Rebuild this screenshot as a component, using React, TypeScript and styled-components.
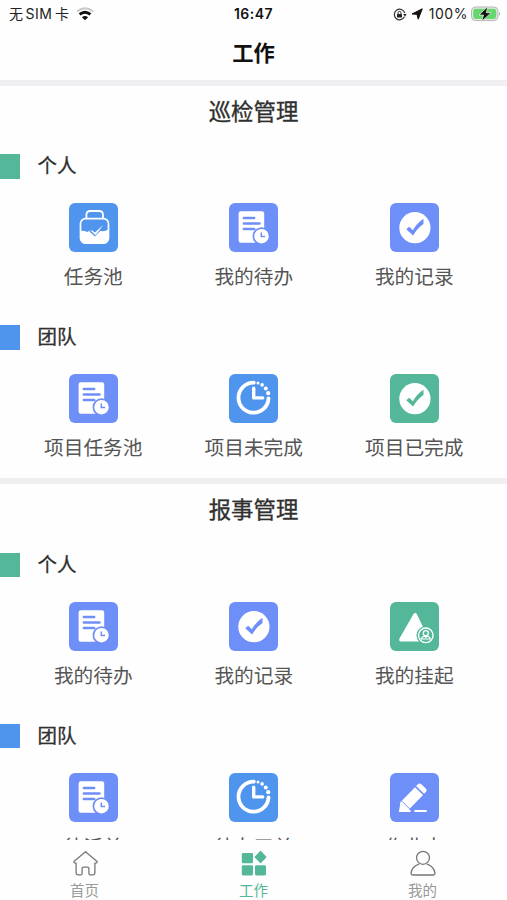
import React from "react";
import styled, { createGlobalStyle } from "styled-components";

const GREEN = "#55b799";
const BLUE = "#5095ed";
const VIOLET = "#6f8ff8";

const GlobalStyle = createGlobalStyle`
  * { box-sizing: border-box; }
  body { margin: 0; background: #fff; overflow: hidden; }
  svg { display: block; flex: none; }
`;

const Screen = styled.div`
  height: 900px;
  width: 100%;
  display: flex;
  flex-direction: column;
  overflow: hidden;
  background: #fefefe;
  font-family: "Inter", "Noto Sans CJK SC", sans-serif;
  color: #303030;
`;

const StatusBar = styled.div`
  height: 28px;
  flex: none;
  display: grid;
  grid-template-columns: 1fr auto 1fr;
  align-items: center;
  padding: 0 6px 0 9px;
  font-size: 14px;
  line-height: 28px;
  color: #222;
`;

const Carrier = styled.div`
  display: flex;
  align-items: center;
  gap: 7px;
  white-space: nowrap;
`;

const CarrierText = styled.span`
  display: flex;
  gap: 2.5px;
  font-size: 14px;
`;

const CarrierLatin = styled.span`
  letter-spacing: 0.5px;
`;

const Clock = styled.div`
  font-weight: 600;
  font-size: 14px;
  letter-spacing: 0.5px;
  margin-right: 3px;
  color: #111;
`;

const StatusRight = styled.div`
  display: flex;
  align-items: center;
  justify-content: flex-end;
`;

const Percent = styled.span`
  margin: 0 3px 0 4px;
  font-size: 14px;
  letter-spacing: 0.55px;
`;

const Header = styled.header`
  height: 51.5px;
  flex: none;
  text-align: center;
  font-size: 21.3px;
  line-height: 50px;
  font-weight: 700;
  color: #111;
`;

const Content = styled.main`
  flex: 1;
  min-height: 0;
  overflow: hidden;
`;

const Section = styled.section`
  height: 398.7px;
  border-top: 6px solid #efeff1;
`;

const SectionTitle = styled.h2`
  margin: 0;
  height: 68.5px;
  text-align: center;
  font-size: 22.4px;
  line-height: 51px;
  font-weight: 400;
  -webkit-text-stroke: 0.35px currentColor;
  color: #303030;
`;

const Group = styled.div`
  height: 171px;
`;

const GroupTitle = styled.div<{ $color: string }>`
  display: flex;
  align-items: center;
  gap: 18px;
  height: 25px;
  font-size: 19.5px;
  line-height: 27px;
  font-weight: 400;
  -webkit-text-stroke: 0.3px currentColor;
  &::before {
    content: "";
    width: 19.5px;
    height: 24.5px;
    background: ${(p) => p.$color};
  }
`;

const Grid = styled.div`
  display: grid;
  grid-template-columns: repeat(3, 1fr);
  padding: 24.3px 12.5px 0 13px;
`;

const Item = styled.div`
  display: flex;
  flex-direction: column;
  align-items: center;
  gap: 10px;
  font-size: 19.7px;
  line-height: 30px;
  color: #555;
  white-space: nowrap;
`;

const Tile = styled.div<{ $color: string }>`
  width: 49px;
  height: 49px;
  border-radius: 6px;
  background: ${(p) => p.$color};
`;

const TabBar = styled.nav`
  height: 60px;
  flex: none;
  display: grid;
  grid-template-columns: repeat(3, 1fr);
  background: #fefefe;
`;

const Tab = styled.div<{ $active?: boolean }>`
  display: flex;
  flex-direction: column;
  align-items: center;
  padding-top: 10px;
  gap: 5px;
  font-size: 14.5px;
  line-height: 20px;
  color: ${(p) => (p.$active ? GREEN : "#999")};
`;

type Kind = "bag" | "todo" | "check" | "clock" | "hold" | "pencil";

function Glyph({ kind, color }: { kind: Kind; color: string }) {
  return (
    <svg width="49" height="49" viewBox="0 0 49 49" fill="none">
      {kind === "bag" && (
        <>
          <path d="M17.4 15.5V12q0-4 4-4h8.6q4 0 4 4v3.5" stroke="#fff" strokeWidth="1.8" />
          <rect x="11.5" y="15.6" width="28" height="24.6" rx="5" stroke="#fff" strokeWidth="1.7" />
          <path d="M11.5 28q3.5-1 6.5 1l3.5-1.8 4 4 5-3.8q4 2 9-1.2V35.6q0 5-5 5h-18q-5 0-5-5Z" fill="#fff" />
          <path d="m21.3 27.3 4.6 3.9 8.6-9" stroke={color} strokeWidth="3.2" />
          <path d="m22.6 26.9 3.3 2.6 8.3-7.6-7.6 10.4-4.6-4.4Z" fill="#fff" />
        </>
      )}
      {kind === "todo" && (
        <>
          <rect x="9.6" y="8.2" width="25.6" height="31.6" rx="2.3" fill="#fff" />
          <path d="M14.9 15h10.2M14.9 20.5h15.6M14.9 26h10.2" stroke={color} strokeWidth="2.6" strokeLinecap="round" />
          <circle cx="32.5" cy="33.2" r="8.1" fill="#fff" stroke={color} strokeWidth="1.7" />
          <path d="M32.3 29.4v4.1h3.8" stroke={color} strokeWidth="1.5" />
        </>
      )}
      {kind === "check" && (
        <>
          <circle cx="24.9" cy="24.7" r="15.6" fill="#fff" />
          <path d="m16.2 26.2 3-2.4 3.7 3.4q4.1-7.4 10.6-11.5v5.3q-5.9 3.8-10.4 11.6Z" fill={color} />
        </>
      )}
      {kind === "clock" && (
        <>
          <path d="M24.8 8.7a15 15 0 1 0 14.7 15.6" stroke="#fff" strokeWidth="3.8" strokeLinecap="round" />
          <g fill="#fff">
            <circle cx="29" cy="8.9" r="1.5" />
            <circle cx="33.1" cy="10.9" r="1.8" />
            <circle cx="36.8" cy="14.4" r="2" />
            <circle cx="39.2" cy="19.2" r="2.1" />
          </g>
          <path d="M24.7 14.3v9.6h9" stroke="#fff" strokeWidth="3.4" strokeLinecap="round" strokeLinejoin="round" />
        </>
      )}
      {kind === "hold" && (
        <>
          <path d="M25.2 13 11 37.6h26Z" fill="#fff" stroke="#fff" strokeWidth="3.8" strokeLinejoin="round" />
          <circle cx="35.8" cy="33.3" r="9.3" fill={color} />
          <circle cx="35.8" cy="33.3" r="7.3" stroke="#fff" strokeWidth="1.4" />
          <circle cx="35.8" cy="31.2" r="2.5" stroke="#fff" strokeWidth="1.3" />
          <path d="M31.2 37q.5-2.3 3.2-2.9l1.4 1.3 1.4-1.3q2.7.6 3.2 2.9Z" stroke="#fff" strokeWidth="1.2" />
        </>
      )}
      {kind === "pencil" && (
        <>
          <g transform="translate(9.6 38.2) rotate(-46)" fill="#fff">
            <path d="M0 0 7.8-5.6V5.6Z" stroke="#fff" strokeLinejoin="round" />
            <path d="M9-5.6H28V5.6H9Z" />
            <path d="M29.5-5.6h2.5q2.5 0 2.5 2.5v6.2q0 2.5-2.5 2.5h-2.5Z" />
          </g>
          <path d="M9.8 38.1h10M25.2 38.1H36" stroke="#fff" strokeWidth="2" strokeLinecap="round" />
        </>
      )}
    </svg>
  );
}

type Entry = { kind: Kind; color: string; label: string };
type GroupData = { title: string; color: string; items: Entry[] };

const sections: { title: string; groups: GroupData[] }[] = [
  {
    title: "巡检管理",
    groups: [
      {
        title: "个人",
        color: GREEN,
        items: [
          { kind: "bag", color: BLUE, label: "任务池" },
          { kind: "todo", color: VIOLET, label: "我的待办" },
          { kind: "check", color: VIOLET, label: "我的记录" },
        ],
      },
      {
        title: "团队",
        color: BLUE,
        items: [
          { kind: "todo", color: VIOLET, label: "项目任务池" },
          { kind: "clock", color: BLUE, label: "项目未完成" },
          { kind: "check", color: GREEN, label: "项目已完成" },
        ],
      },
    ],
  },
  {
    title: "报事管理",
    groups: [
      {
        title: "个人",
        color: GREEN,
        items: [
          { kind: "todo", color: VIOLET, label: "我的待办" },
          { kind: "check", color: VIOLET, label: "我的记录" },
          { kind: "hold", color: GREEN, label: "我的挂起" },
        ],
      },
      {
        title: "团队",
        color: BLUE,
        items: [
          { kind: "todo", color: VIOLET, label: "待派单" },
          { kind: "clock", color: BLUE, label: "待办工单" },
          { kind: "pencil", color: VIOLET, label: "作业中" },
        ],
      },
    ],
  },
];

function Wifi() {
  return (
    <svg width="18" height="14" viewBox="0 0 18 14" fill="none">
      <path d="M.9 4.4q8.1-6.4 16.2 0" stroke="#c9c9c9" strokeWidth="1.9" />
      <path d="M3.6 7.4q5.4-4.4 10.8 0" stroke="#111" strokeWidth="2.8" />
      <path d="M5.9 10.2q3.1-2.3 6.2 0L9 13.2Z" fill="#111" />
    </svg>
  );
}

function RotationLock() {
  return (
    <svg width="14" height="13" viewBox="0 0 14 13" fill="none">
      <path d="M11.4 8.8A5.3 5.3 0 1 1 11.7 5" stroke="#333" strokeWidth="1.2" />
      <path d="m10.2 6.1 3.4-.2-1.6 2.8Z" fill="#222" />
      <rect x="4" y="5.9" width="5" height="3.6" rx=".6" fill="#222" />
      <path d="M5 6V4.9q0-1.5 1.5-1.5T8 4.9V6" stroke="#333" />
    </svg>
  );
}

function LocationArrow() {
  return (
    <svg width="18" height="12" viewBox="0 0 18 12">
      <path d="M15.3.8 11.2 11.2 10 6.3 5 6Z" fill="#111" stroke="#111" strokeWidth="1" strokeLinejoin="round" />
    </svg>
  );
}

function Battery() {
  return (
    <svg width="30" height="16" viewBox="0 0 30 16">
      <rect x=".5" y="1" width="26.4" height="13.6" rx="4" fill="#e4ebe4" stroke="#b4b4b4" />
      <rect x="2.2" y="2.7" width="23" height="10.2" rx="2.4" fill="#66d66e" />
      <path d="M28 5.7q2 2.2 0 4.4Z" fill="#aaa" />
      <path d="M16.8.6 8 9h4.5l-1.9 6.4L20.2 6.7h-4.9Z" fill="#111" stroke="#f4fff4" strokeWidth=".7" />
    </svg>
  );
}

export default function App() {
  return (
    <Screen>
      <GlobalStyle />
      <StatusBar>
        <Carrier>
          <CarrierText>
            <span>无</span>
            <CarrierLatin>SIM</CarrierLatin>
            <span>卡</span>
          </CarrierText>
          <Wifi />
        </Carrier>
        <Clock>16:47</Clock>
        <StatusRight>
          <RotationLock />
          <LocationArrow />
          <Percent>100%</Percent>
          <Battery />
        </StatusRight>
      </StatusBar>
      <Header>工作</Header>
      <Content>
        {sections.map((section) => (
          <Section key={section.title}>
            <SectionTitle>{section.title}</SectionTitle>
            {section.groups.map((group) => (
              <Group key={group.title}>
                <GroupTitle $color={group.color}>{group.title}</GroupTitle>
                <Grid>
                  {group.items.map((item) => (
                    <Item key={item.label}>
                      <Tile $color={item.color}>
                        <Glyph kind={item.kind} color={item.color} />
                      </Tile>
                      {item.label}
                    </Item>
                  ))}
                </Grid>
              </Group>
            ))}
          </Section>
        ))}
      </Content>
      <TabBar>
        <Tab>
          <svg width="28" height="26" viewBox="0 0 28 26" fill="none" stroke="#777" strokeWidth="1.3" strokeLinejoin="round">
            <path d="M14.5 1.8 2.9 11.4q-.5 2 2.2 1.7V23q0 1.8 1.8 1.8h2.8q1.4 0 1.4-1.4v-5q0-1.2 1.2-1.2h4.4q1.2 0 1.2 1.2v5q0 1.4 1.4 1.4h2.8q1.8 0 1.8-1.8v-9.9q2.7.3 2.2-1.7Z" />
          </svg>
          首页
        </Tab>
        <Tab $active>
          <svg width="26" height="26" viewBox="0 0 26 26" fill={GREEN}>
            <rect x=".8" y="3" width="11.2" height="10.2" rx="1.3" />
            <rect x=".8" y="15.2" width="11.2" height="10.2" rx="1.3" />
            <rect x="14" y="15.2" width="11" height="10.2" rx="1.3" />
            <path d="m19.6 1.5 5.3 5.6-5.3 5.5-5.5-5.5Z" stroke={GREEN} strokeWidth="1.2" strokeLinejoin="round" />
          </svg>
          工作
        </Tab>
        <Tab>
          <svg width="26" height="26" viewBox="0 0 26 26" fill="none" stroke="#777" strokeWidth="1.3">
            <circle cx="13" cy="7.8" r="6.5" />
            <path d="M9.1 14.2Q2 16.4 1 23.2 1 25 2.6 25h20.8q1.6 0 1.6-1.8-1-6.8-8.1-9" strokeLinejoin="round" />
          </svg>
          我的
        </Tab>
      </TabBar>
    </Screen>
  );
}
